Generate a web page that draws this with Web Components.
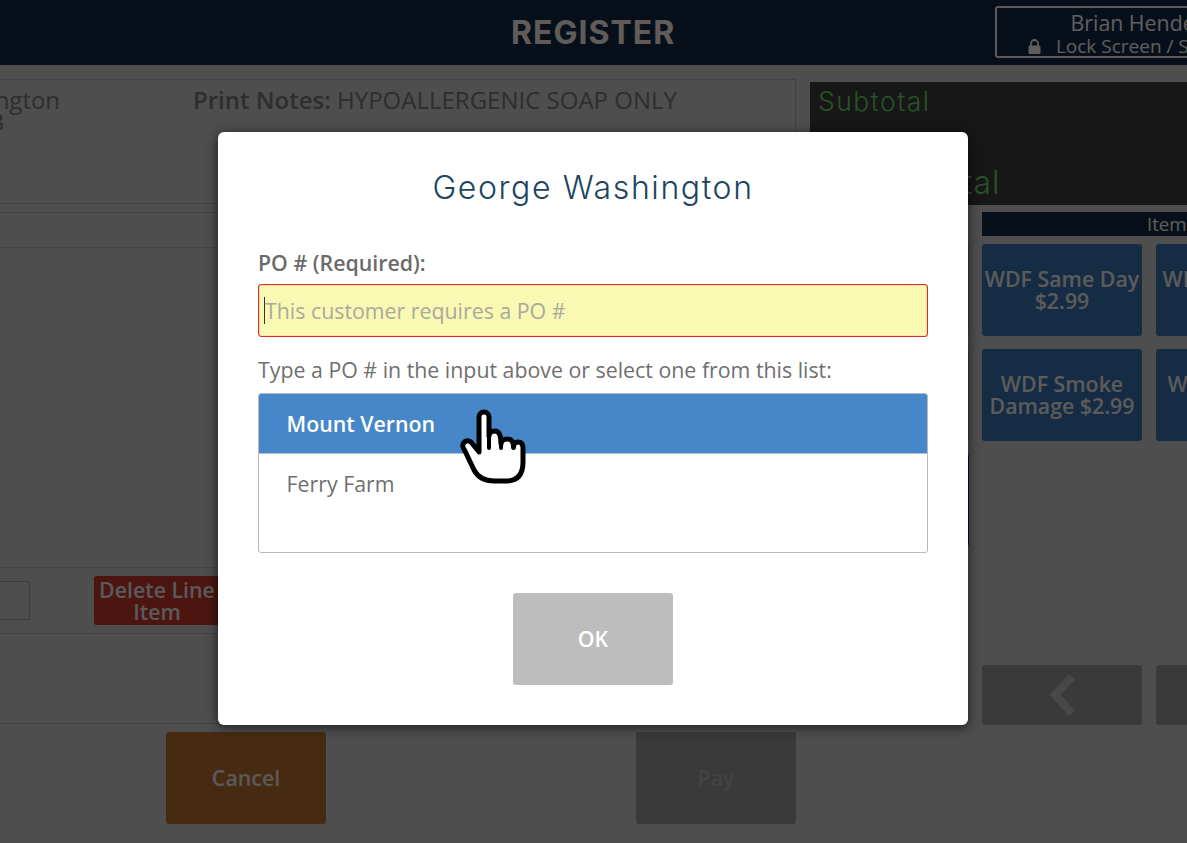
<!DOCTYPE html>
<html lang="en">
<head>
<meta charset="utf-8">
<title>Register</title>
<style>
html,body{margin:0;padding:0;height:843px;overflow:hidden;background:#c2c2c2}
body{font-family:"Open Sans","Liberation Sans",sans-serif;position:relative}
</style>
</head>
<body>
<pos-app>
  <pos-header slot="header" title-text="REGISTER" user="Brian Henderson" action="Lock Screen / Switch User"></pos-header>
  <pos-order slot="left"></pos-order>
  <pos-side slot="right"></pos-side>
</pos-app>
<po-modal customer="George Washington">
  <po-option selected>Mount Vernon</po-option>
  <po-option>Ferry Farm</po-option>
</po-modal>
<script>
function def(name, css, html, extra){
  const tpl=document.createElement('template');
  tpl.innerHTML='<style>'+css+'</style>'+html;
  customElements.define(name,class extends HTMLElement{
    constructor(){super();this.attachShadow({mode:'open'}).appendChild(tpl.content.cloneNode(true));}
    connectedCallback(){ if(extra) extra(this,this.shadowRoot); }
  });
}

def('pos-btn',`
:host{display:flex;align-items:center;justify-content:center;width:160px;height:92px;box-sizing:border-box;border-radius:3px;background:var(--bg,#356eaa);color:#e4e4e4;
font:600 21.33px/22px "Open Sans",sans-serif;text-align:center;flex:none}
`,`<slot></slot>`);

def('pos-app',`
:host{display:block;width:1640px;margin-left:-160px}
.main{display:grid;grid-template-columns:956px 1fr;column-gap:14px;padding:14px 0 0}
`,`<slot name="header"></slot><div class="main"><slot name="left"></slot><slot name="right"></slot></div>`);

def('pos-header',`
:host{display:grid;grid-template-columns:1fr 320px;align-items:start;height:65px;background:#122a41;box-sizing:border-box;padding:6px 315px 0 1155px;position:relative;color:#fff}
h1{position:absolute;left:671px;top:0;margin:0;font:700 32px/65px Inter,sans-serif;width:164px;text-align:center;color:#eee6de;white-space:nowrap;letter-spacing:1px}
.user{grid-column:2;height:52px;box-sizing:border-box;border:2px solid #e0e0e0;border-radius:3px;text-align:center;color:#ececec;font-family:"Open Sans",sans-serif;padding-top:3px;white-space:nowrap}
.n{font-size:21.33px;line-height:24px;font-weight:500}
.a{font-size:19px;line-height:22px;font-weight:500;display:flex;justify-content:center;align-items:center;gap:15px}
svg{display:block}
`,`<h1 id="t"></h1><div class="user"><div class="n" id="u"></div><div class="a"><svg width="13" height="15" viewBox="0 0 13 15"><path d="M3 7V4.5a3.5 3.5 0 0 1 7 0V7" fill="none" stroke="#ececec" stroke-width="1.8"/><rect x="0.5" y="6.5" width="12" height="8.5" rx="1.5" fill="#ececec"/></svg><span id="l"></span></div></div>`,
(h,s)=>{s.getElementById('t').textContent=h.getAttribute('title-text');s.getElementById('u').textContent=h.getAttribute('user');s.getElementById('l').textContent=h.getAttribute('action');});

def('pos-order',`
:host{display:block;color:#737373;font-family:"Open Sans",sans-serif;font-size:24px}
.panel{border:1px solid #a9a9a9;border-left:0;height:645px;box-sizing:border-box;display:flex;flex-direction:column}
.info{height:124px;flex:none;display:grid;grid-template-columns:353px 1fr;border-bottom:1px solid #a9a9a9;padding-top:9px;box-sizing:border-box;line-height:22px;white-space:nowrap}
.info>div:first-child{margin-left:-1px;line-height:22px}
.sp{height:8px;flex:none}
.thead{height:36px;flex:none;border:solid #a9a9a9;border-width:1px 0;box-sizing:border-box}
.rows{flex:1}
.act{height:67px;flex:none;border:solid #a9a9a9;border-width:1px 0;box-sizing:border-box;display:flex;align-items:center;padding-left:84px}
.qty{width:106px;height:39px;box-sizing:border-box;border:1px solid #999;border-radius:2px;margin-right:64px}
.del{--bg:#be3528;height:49px;width:126px;color:#e0e0e0}
.tail{height:89px;flex:none}
.foot{display:flex;padding:8px 0 0 326px;gap:310px}
.cancel{--bg:#b2692d;color:#e0e0e0}
.pay{--bg:#929292;color:#a8a8a8}
b{font-weight:600}
`,`<div class="panel">
<div class="info"><div>George Washington<br>(703) 780-2003</div><div><b>Print Notes:</b> HYPOALLERGENIC SOAP ONLY</div></div>
<div class="sp"></div><div class="thead"></div><div class="rows"></div>
<div class="act"><div class="qty"></div><pos-btn class="del">Delete Line<br>Item</pos-btn></div>
<div class="tail"></div></div>
<div class="foot"><pos-btn class="cancel">Cancel</pos-btn><pos-btn class="pay">Pay</pos-btn></div>`);

def('pos-side',`
:host{display:block;font-family:"Open Sans",sans-serif}
.disp{height:123px;margin-top:3px;background:#3a3a3a;color:#64cc64;font-family:Inter,sans-serif;font-weight:300;position:relative;padding:6px 8px;box-sizing:border-box}
.s{font-size:26.5px;line-height:27px;letter-spacing:1.5px}
.t{font-size:32px;line-height:36px;position:absolute;left:8px;bottom:4px;letter-spacing:1px;white-space:nowrap}
.cols{display:grid;grid-template-columns:159px 1fr;column-gap:13px;margin-top:7px}
.cats{display:flex;flex-direction:column;gap:13px;padding-top:32px}
.cats pos-btn{width:159px;height:92px;--bg:#999}
.cats pos-btn:last-child{--bg:#1a1a96}
.items{display:flex;flex-direction:column;height:513px}
.bar{height:24px;background:#122a41;color:#e8e8e8;font-size:18.67px;line-height:24px;padding-left:165px;white-space:nowrap}
.grid{display:grid;grid-template-columns:160px 160px;gap:13px 14px;margin-top:8px;flex:1;align-content:start}
.grid pos-btn{align-items:flex-start;--bg:#356eaa;white-space:nowrap}
.grid pos-btn.m{align-items:center}
.grid span{display:block;padding-top:24px}
.nav{display:flex;gap:14px}
.nav pos-btn{height:60px;--bg:#929292}
svg{display:block}
`,`<div class="disp"><div class="s">Subtotal</div><div class="t">Grand Total</div></div>
<div class="cols"><div class="cats"><pos-btn></pos-btn><pos-btn></pos-btn><pos-btn></pos-btn></div>
<div class="items"><div class="bar">Items</div>
<div class="grid">
<pos-btn><span>WDF Same Day<br>$2.99</span></pos-btn><pos-btn><span>WDF Next Day<br>$1.99</span></pos-btn>
<pos-btn class="m">WDF Smoke<br>Damage $2.99</pos-btn><pos-btn class="m">WDF Bedding<br>$3.99</pos-btn>
</div>
<div class="nav"><pos-btn><svg width="28" height="42" viewBox="-1 0 28 42"><path d="M23 3 6 21l17 18" fill="none" stroke="#b5b5b5" stroke-width="8"/></svg></pos-btn><pos-btn></pos-btn></div>
</div></div>`);

def('po-option',`
:host{display:block;height:60px;box-sizing:border-box;padding:0 27.5px;font:400 21.33px/60px "Open Sans",sans-serif;color:#6f6f6f}
:host([selected]){background:#4587c9;color:#fff;font-weight:600;border-bottom:1px solid #bdbdbd}
`,`<slot></slot>`);

def('po-modal',`
:host{position:absolute;inset:0;display:block;background:rgba(0,0,0,.6);font-family:"Open Sans",sans-serif}
.box{position:absolute;left:218px;top:132px;width:750px;height:593px;box-sizing:border-box;background:#fff;border-radius:6px;box-shadow:0 2px 12px rgba(0,0,0,.65);padding:0 40px;display:flex;flex-direction:column}
h2{margin:38px 0 0;text-align:center;font:300 32px/36px Inter,sans-serif;color:#1c4560;letter-spacing:1.6px}
label{display:block;margin-top:43px;font:600 21.33px/27px "Open Sans",sans-serif;color:#6b6b6b}
.inp{margin-top:8px;height:53px;box-sizing:border-box;background:#f9f9b3;border:1px solid #e02b2b;box-shadow:inset 0 0 1px #e02b2b;border-radius:3px;padding:0 6px;font:400 21.33px/51px "Open Sans",sans-serif;color:#a9a99c;position:relative}
.caret{position:absolute;left:5px;top:12px;width:1px;height:27px;background:#333}
.hint{margin-top:19px;font:400 21.33px/27px "Open Sans",sans-serif;color:#6f6f6f}
.list{margin-top:10px;height:160px;box-sizing:border-box;border:1px solid #b9b9b9;border-radius:3px;overflow:hidden}
.ok{margin:40px auto 0;width:160px;height:92px;background:#bdbdbd;border-radius:3px;color:#fff;font:600 21.33px/92px "Open Sans",sans-serif;text-align:center}
.hand{position:absolute;left:242px;top:276px}
`,`<div class="box">
<h2 id="c"></h2>
<label>PO # (Required):</label>
<div class="inp"><span class="caret"></span>This customer requires a PO #</div>
<div class="hint">Type a PO # in the input above or select one from this list:</div>
<div class="list"><slot></slot></div>
<div class="ok">OK</div>
<svg class="hand" width="70" height="80" viewBox="460 408 70 80"><path d="M479 452 471 442Q466 439 463 444 462 447 465 451L474 470Q480 481 494 481H506Q523 481 523 462V448Q523 442 518 442 513.5 442 513.5 447 513.5 439 507.5 439 501 439 501 444 501 431 495 431 489 431 489 436V417a5 5 0 0 0-10 0Z" fill="#fff" stroke="#000" stroke-width="5" stroke-linejoin="round"/><path d="M489 434V448M501 442V448M513.5 445V448" fill="none" stroke="#000" stroke-width="4" stroke-linecap="round"/></svg>
</div>`,(h,s)=>{s.getElementById('c').textContent=h.getAttribute('customer');});
</script>
</body>
</html>
